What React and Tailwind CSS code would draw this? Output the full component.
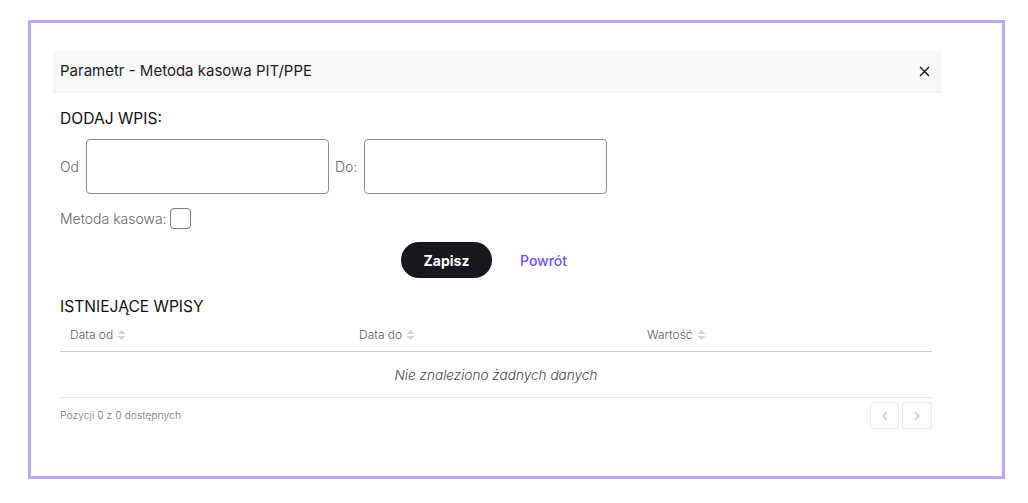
import React from "react";

function SortIcon() {
  return (
    <svg width="9" height="12" viewBox="0 0 9 12" className="ml-[4px] inline-block">
      <path d="M4.5 1 L8.5 5 L0.5 5 Z" fill="#d4d4d4" />
      <path d="M4.5 11 L8.5 7 L0.5 7 Z" fill="#d4d4d4" />
    </svg>
  );
}

export default function App() {
  return (
    <div className="w-[1028px] h-[503px] bg-white pt-[20px] pl-[28px]" style={{ fontFamily: "Inter, 'Noto Sans', sans-serif" }}>
      <div className="w-[977px] h-[459px] border-[3px] border-[#bba8fb] pt-[28px] pl-[22px]">
        <div className="w-[889px]">
          <div className="h-[42px] bg-[#f8f8f8] border-b border-[#efefef] flex items-center justify-between pl-[7px] pr-[12px]">
            <span className="text-[15px] text-[#1c1c1c]">Parametr - Metoda kasowa PIT/PPE</span>
            <svg width="11" height="11" viewBox="0 0 11 11">
              <path d="M1 1 L10 10 M10 1 L1 10" stroke="#111" strokeWidth="1.4" />
            </svg>
          </div>
          <div className="pl-[7px] pr-[10px]">
            <div className="mt-[14px] text-[15.6px] leading-[24px] text-[#111]">DODAJ WPIS:</div>
            <div className="mt-[8px] flex items-center">
              <span className="text-[14px] font-light text-[#666] w-[26px]">Od</span>
              <div className="w-[243px] h-[55px] border border-[#8f8b98] rounded-[4px]"></div>
              <span className="text-[14px] font-light text-[#666] ml-[6px] w-[29px]">Do:</span>
              <div className="w-[243px] h-[55px] border border-[#8f8b98] rounded-[4px]"></div>
            </div>
            <div className="mt-[14px] flex items-center h-[21px]">
              <span className="text-[14px] font-light text-[#666]">Metoda kasowa:</span>
              <div className="ml-[3px] w-[21px] h-[21px] border-[1.5px] border-[#7d7a86] rounded-[4px]"></div>
            </div>
            <div className="mt-[13px] flex items-center pl-[341px]">
              <div className="w-[91px] h-[36px] rounded-full bg-[#17171c] text-white text-[14px] font-bold flex items-center justify-center">Zapisz</div>
              <span className="ml-[28px] text-[14px] font-medium text-[#7351ee]">Powrót</span>
            </div>
            <div className="mt-[17px] text-[15.6px] leading-[24px] text-[#111]">ISTNIEJĄCE WPISY</div>
            <div className="grid grid-cols-[289px_288px_1fr] h-[33px] items-center border-b border-[#c9c9c9] text-[12px] font-light text-[#5e5e5e]">
              <div className="pl-[10px] flex items-center">Data od<SortIcon /></div>
              <div className="pl-[10px] flex items-center">Data do<SortIcon /></div>
              <div className="pl-[10px] flex items-center">Wartość<SortIcon /></div>
            </div>
            <div className="h-[46px] pt-[2px] flex items-center justify-center border-b border-[#e6e6e6] text-[13.6px] italic font-light text-[#444]">
              Nie znaleziono żadnych danych
            </div>
            <div className="mt-[4px] flex items-center justify-between">
              <span className="text-[10.4px] font-light text-[#777]">Pozycji 0 z 0 dostępnych</span>
              <div className="flex gap-[3px]">
                <div className="w-[29px] h-[27px] border border-[#ececec] rounded-[3px] flex items-center justify-center">
                  <svg width="8" height="10" viewBox="0 0 8 10"><path d="M6 1 L2 5 L6 9" fill="none" stroke="#c8c8c8" strokeWidth="1.5" /></svg>
                </div>
                <div className="w-[30px] h-[27px] border border-[#ececec] rounded-[3px] flex items-center justify-center">
                  <svg width="8" height="10" viewBox="0 0 8 10"><path d="M2 1 L6 5 L2 9" fill="none" stroke="#c8c8c8" strokeWidth="1.5" /></svg>
                </div>
              </div>
            </div>
          </div>
        </div>
      </div>
    </div>
  );
}
